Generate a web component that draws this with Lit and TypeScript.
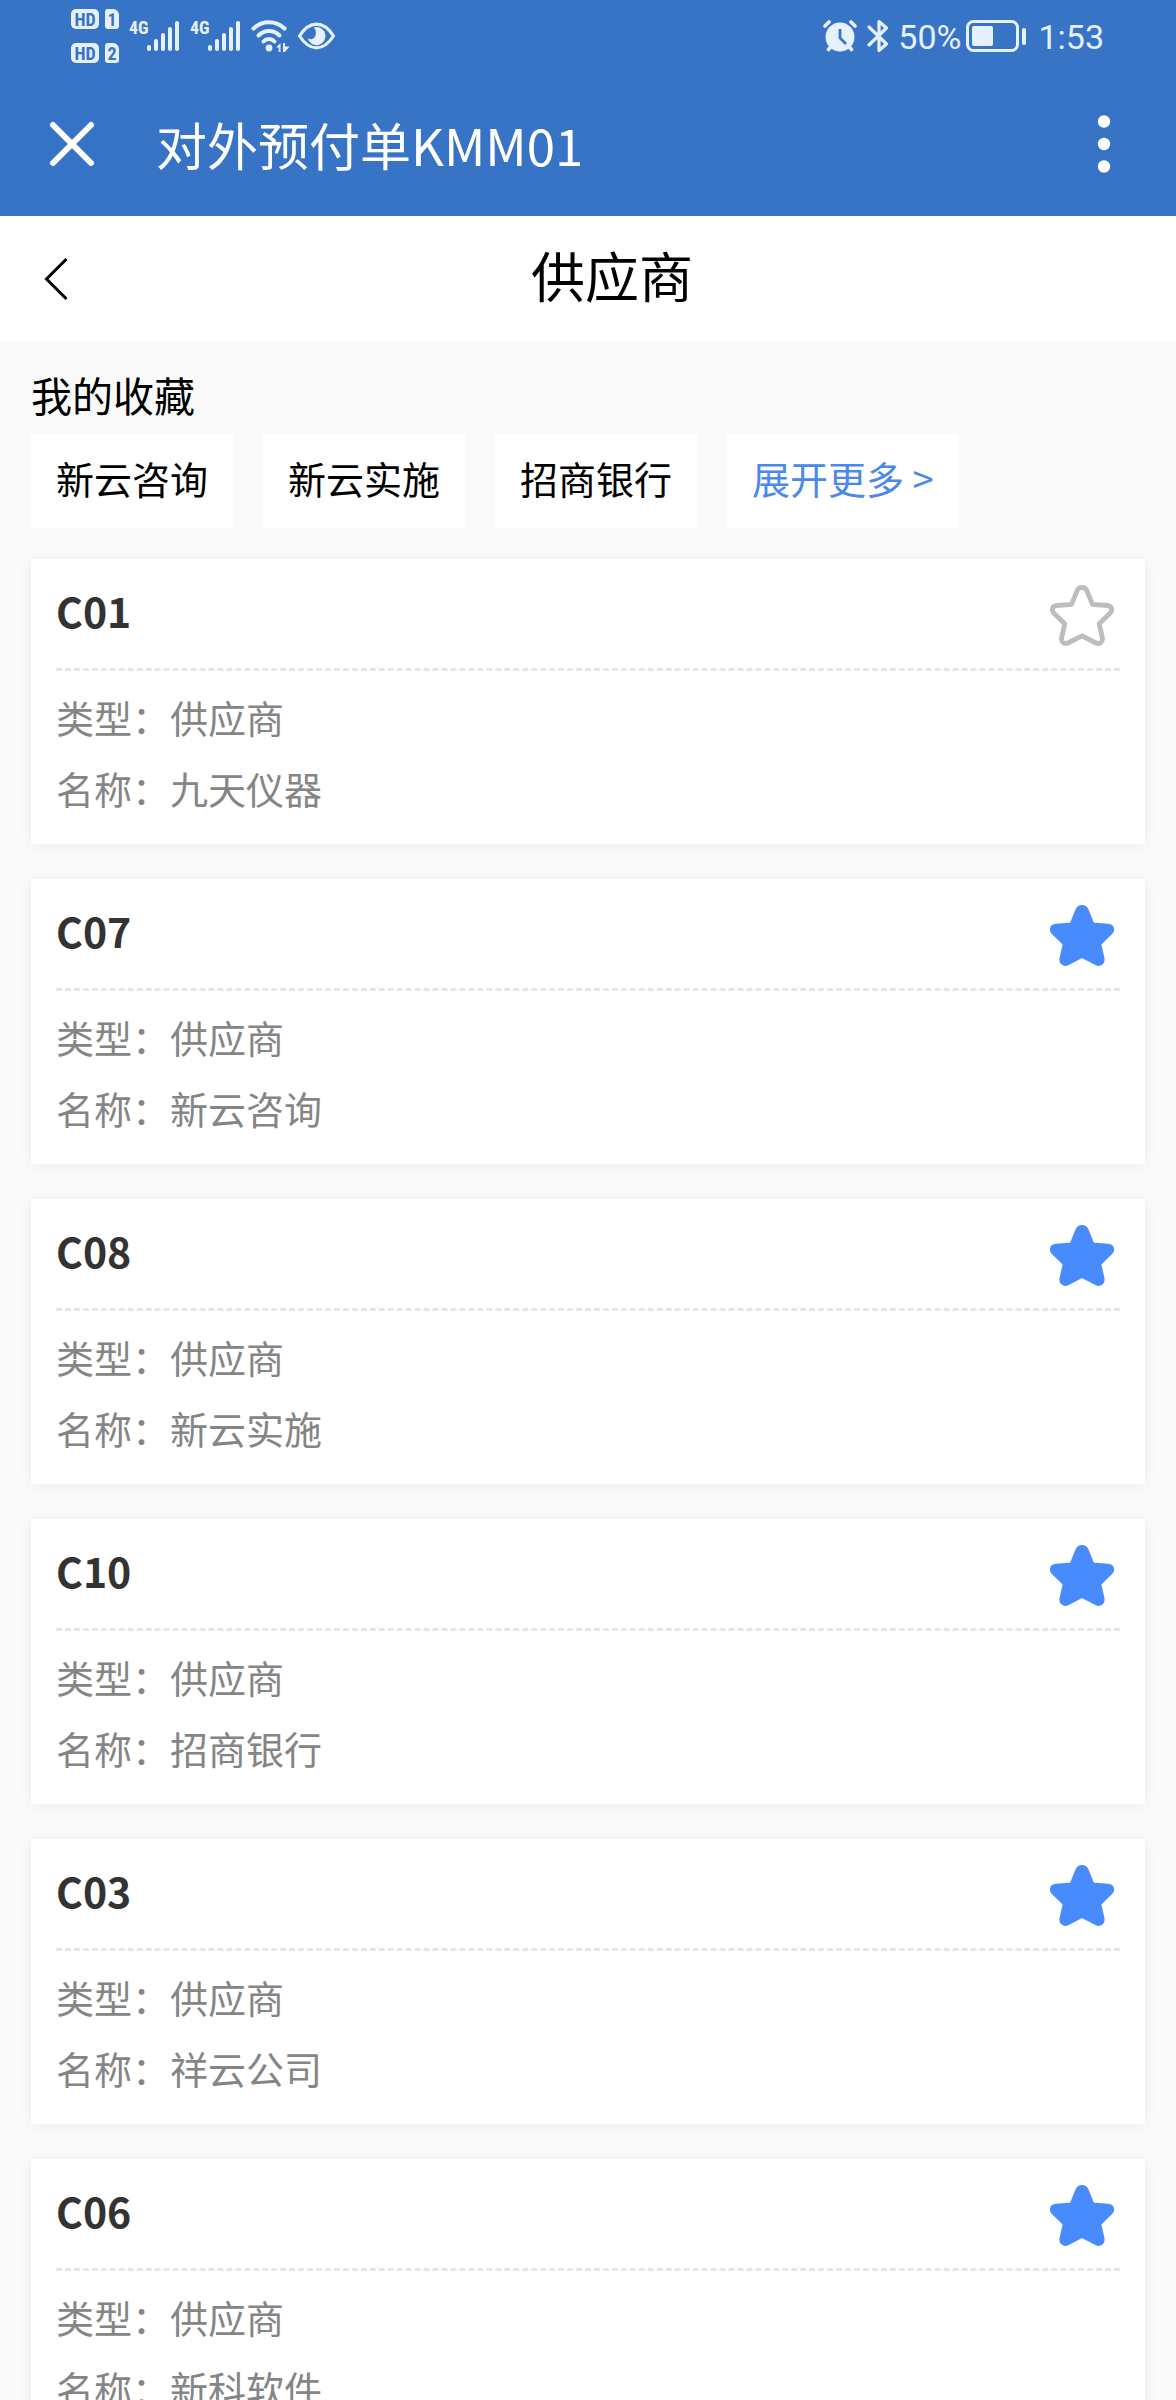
import { LitElement, html, css, svg } from "lit";
import { customElement, property, state } from "lit/decorators.js";

interface Supplier {
  code: string;
  type: string;
  name: string;
  starred: boolean;
}

const STAR_PATH =
  "M32 3.500c2.200 0 4 1.200 5 3.300l5.800 14.200 15.200 1.200c5 .6 6 5 2.600 8.300L49.800 41l3.200 14.600c.8 4.600-3.200 7-7 5L32 53.500 18 60.600c-3.800 2-7.800-.4-7-5L14.200 41 3.400 30.500C0 27.200 1 22.800 6 22.200L21.200 21 27 6.800c1-2.100 2.800-3.300 5-3.300z";

const signalBars = svg`
  <rect x="0" y="24" width="4" height="6" rx="2"/>
  <rect x="7" y="18" width="4" height="12" rx="2"/>
  <rect x="14" y="12" width="4" height="18" rx="2"/>
  <rect x="21" y="6" width="4" height="24" rx="2"/>
  <rect x="28" y="0" width="4" height="30" rx="2"/>`;

@customElement("status-bar")
export class StatusBar extends LitElement {
  static styles = css`
    :host {
      display: flex;
      justify-content: space-between;
      height: 72px;
      padding: 0 72px 0 71px;
      color: #e6f1ff;
      font-family: Roboto, "Noto Sans CJK SC", sans-serif;
    }
    .side {
      display: flex;
      align-items: center;
    }
    .sims {
      display: grid;
      grid-template-columns: 28px 14px;
      gap: 14px 6px;
      margin-right: 10px;
    }
    .badge {
      height: 20px;
      border-radius: 5px;
      background: #e6f1ff;
      color: #3874c5;
      font: bold 18px/21px "Liberation Sans Narrow", "Roboto Condensed", Roboto, sans-serif;
      text-align: center;
    }
    .card {
      border-radius: 3px 6px 3px 3px;
    }
    .net {
      display: flex;
      align-items: flex-start;
      margin-right: 10px;
    }
    .gen {
      width: 18px;
      font: bold 18px/14px "Liberation Sans Narrow", "Roboto Condensed", Roboto, sans-serif;
    }
    svg {
      display: block;
      flex: none;
      fill: currentColor;
    }
    .wifi {
      margin-right: 7px;
    }
    .alarm {
      margin-right: 10px;
    }
    .value {
      padding-top: 2px;
      font-size: 34px;
      line-height: 40px;
    }
    .level {
      margin: 0 5px 0 9px;
    }
    .battery {
      margin-right: 11px;
    }
  `;

  render() {
    return html`
      <div class="side">
        <div class="sims">
          <span class="badge">HD</span><span class="badge card">1</span>
          <span class="badge">HD</span><span class="badge card">2</span>
        </div>
        <div class="net">
          <span class="gen">4G</span>
          <svg width="33" height="31" viewBox="0 0 33 31">${signalBars}</svg>
        </div>
        <div class="net">
          <span class="gen">4G</span>
          <svg width="33" height="31" viewBox="0 0 33 31">${signalBars}</svg>
        </div>
        <svg class="wifi" width="39" height="34" viewBox="0 0 39 34">
          <g fill="none" stroke="currentColor" stroke-width="4" stroke-linecap="round">
            <path d="M2.500 9.500C11 1 25 1 33.500 9.500" />
            <path d="M7.500 16.500c6-6 15-6 21 0" />
            <path d="M12.500 22.500c3-3.200 8-3.200 11 0" />
          </g>
          <circle cx="18" cy="29" r="3.400" />
          <path d="M25 28.500l4.500-4.500v9h-1.800v-4.500zM38.500 27.500L34 33h-2V24h2v3.500z" />
        </svg>
        <svg width="39" height="28" viewBox="0 0 39 28">
          <path
            d="M2.500 14C8 5.500 13.500 2.200 19.500 2.200S31 5.500 36.500 14C31 22.500 25.500 25.800 19.500 25.800S8 22.500 2.500 14z"
            fill="none" stroke="currentColor" stroke-width="3.200" stroke-linejoin="round" />
          <path d="M17 5.500a9 9 0 1 1-6.300 10.500c2 1.800 5 1.500 6.500-.2 2.200-2.400 2.300-7-.2-10.300z" />
        </svg>
      </div>
      <div class="side">
        <svg class="alarm" width="34" height="32" viewBox="0 0 34 32">
          <g stroke="currentColor" stroke-width="3.600" stroke-linecap="round">
            <path d="M2 6l4-4M28 2l4 4M5.500 29.500l3-3.500M28.500 29.500l-3-3.500" />
          </g>
          <circle cx="17" cy="17" r="14.500" />
          <path d="M17 9v9l6 6" fill="none" stroke="#3874c5" stroke-width="2.800" />
        </svg>
        <svg width="22" height="34" viewBox="0 0 22 34">
          <path d="M2 8l17.500 17-7.500 6.500v-29L19.500 9 2 26" fill="none" stroke="currentColor"
            stroke-width="3.200" stroke-linejoin="round" stroke-linecap="round" />
        </svg>
        <span class="value level">50%</span>
        <svg class="battery" width="61" height="34" viewBox="0 0 61 34">
          <rect x="1.500" y="2.500" width="50" height="29" rx="6" fill="none" stroke="currentColor" stroke-width="3" />
          <rect x="6" y="7" width="21" height="20" rx="2" />
          <rect x="56" y="9" width="4" height="17" rx="2" />
        </svg>
        <span class="value">1:53</span>
      </div>
    `;
  }
}

@customElement("supplier-card")
export class SupplierCard extends LitElement {
  @property({ attribute: false }) supplier!: Supplier;

  static styles = css`
    :host {
      display: block;
      padding: 0 25px 21px;
      background: #fff;
      box-shadow: 0 1px 14px rgba(0, 0, 0, 0.06);
    }
    .head {
      display: flex;
      align-items: center;
      justify-content: space-between;
      height: 109px;
      border-bottom: 3px dashed #e6e6e6;
    }
    .code {
      margin: 0;
      padding-bottom: 8px;
      color: #333;
      font-size: 41px;
      font-weight: 700;
      line-height: 50px;
    }
    .star {
      margin: 0 6px 0 0;
      padding: 2px 0 0;
      border: 0;
      background: none;
    }
    .star svg {
      display: block;
      fill: none;
      stroke: #bdbdbd;
      stroke-width: 5;
      stroke-linejoin: round;
    }
    .star.on svg {
      fill: #478bff;
      stroke: #478bff;
      stroke-width: 3;
    }
    .fields {
      margin: 0;
      padding-top: 10px;
      color: #858585;
      font-size: 38px;
      line-height: 71px;
    }
    .row {
      display: flex;
    }
    .value {
      margin: 0;
    }
  `;

  private toggle() {
    this.dispatchEvent(new CustomEvent("toggle-star", { detail: this.supplier.code }));
  }

  render() {
    const s = this.supplier;
    return html`
      <header class="head">
        <h2 class="code">${s.code}</h2>
        <button class="star ${s.starred ? "on" : ""}" aria-label="收藏" aria-pressed=${s.starred} @click=${this.toggle}>
          <svg width="64" height="64" viewBox=${s.starred ? "0 0 64 64" : "-1 -1 66 66"}><path d=${STAR_PATH} /></svg>
        </button>
      </header>
      <dl class="fields">
        <div class="row"><dt>类型：</dt><dd class="value">${s.type}</dd></div>
        <div class="row"><dt>名称：</dt><dd class="value">${s.name}</dd></div>
      </dl>
    `;
  }
}

@customElement("app-root")
export class AppRoot extends LitElement {
  @state() private suppliers: Supplier[] = [
    { code: "C01", type: "供应商", name: "九天仪器", starred: false },
    { code: "C07", type: "供应商", name: "新云咨询", starred: true },
    { code: "C08", type: "供应商", name: "新云实施", starred: true },
    { code: "C10", type: "供应商", name: "招商银行", starred: true },
    { code: "C03", type: "供应商", name: "祥云公司", starred: true },
    { code: "C06", type: "供应商", name: "新科软件", starred: true },
  ];

  private favourites = ["新云咨询", "新云实施", "招商银行"];

  static styles = css`
    :host {
      display: flex;
      flex-direction: column;
      height: 100vh;
      background: #fafafa;
      color: #000;
      font-family: "Noto Sans CJK SC", sans-serif;
    }
    button {
      margin: 0;
      border: 0;
      background: none;
      color: inherit;
      font: inherit;
    }
    svg {
      display: block;
    }
    .top {
      flex: none;
      background: #3874c5;
      color: #fff;
    }
    .appbar {
      display: flex;
      align-items: center;
      height: 144px;
      padding: 0 61px 0 48px;
    }
    .appbar button {
      padding: 0;
    }
    .title {
      flex: 1;
      margin: 0 0 0 60px;
      font-size: 51px;
      font-weight: 400;
      line-height: 64px;
    }
    .nav {
      flex: none;
      display: flex;
      align-items: center;
      height: 125px;
      padding-right: 40px;
      background: #fff;
    }
    .back {
      width: 88px;
      padding: 0 0 0 43px;
    }
    .heading {
      flex: 1;
      margin: 0;
      padding-bottom: 8px;
      font-size: 54px;
      font-weight: 400;
      line-height: 64px;
      text-align: center;
    }
    .content {
      flex: 1;
      min-height: 0;
      overflow-y: auto;
      scrollbar-width: none;
    }
    .favourites {
      padding: 28px 31px 0;
      background: #f9f9f9;
    }
    .label {
      margin: 0 0 15px;
      font-size: 41px;
      font-weight: 400;
      line-height: 50px;
    }
    .chips {
      display: flex;
      flex-wrap: wrap;
      gap: 30px;
    }
    .chip {
      height: 94px;
      padding: 0 25px 8px;
      background: #fff;
      font-size: 38px;
    }
    .more {
      color: #4a88ea;
    }
    .list {
      display: grid;
      gap: 35px;
      padding: 31px;
    }
  `;

  private toggle(e: CustomEvent<string>) {
    this.suppliers = this.suppliers.map((s) =>
      s.code === e.detail ? { ...s, starred: !s.starred } : s,
    );
  }

  render() {
    return html`
      <div class="top">
        <status-bar></status-bar>
        <div class="appbar">
          <button aria-label="关闭">
            <svg width="48" height="48" viewBox="0 0 48 48">
              <path d="M5 5l38 38M43 5L5 43" stroke="#fff" stroke-width="6" stroke-linecap="round" />
            </svg>
          </button>
          <h1 class="title">对外预付单KMM01</h1>
          <button aria-label="更多">
            <svg width="22" height="60" viewBox="0 0 22 60" fill="#fff">
              <circle cx="11" cy="7.500" r="6.200" />
              <circle cx="11" cy="30" r="6.200" />
              <circle cx="11" cy="52.500" r="6.200" />
            </svg>
          </button>
        </div>
      </div>
      <nav class="nav">
        <button class="back" aria-label="返回">
          <svg width="26" height="44" viewBox="0 0 26 44">
            <path d="M23.500 2L3.500 22l20 20" fill="none" stroke="#000" stroke-width="3" />
          </svg>
        </button>
        <h2 class="heading">供应商</h2>
      </nav>
      <main class="content">
        <section class="favourites">
          <h3 class="label">我的收藏</h3>
          <div class="chips">
            ${this.favourites.map((f) => html`<button class="chip">${f}</button>`)}
            <button class="chip more">展开更多 &gt;</button>
          </div>
        </section>
        <section class="list">
          ${this.suppliers.map(
            (s) => html`<supplier-card .supplier=${s} @toggle-star=${this.toggle}></supplier-card>`,
          )}
        </section>
      </main>
    `;
  }
}
